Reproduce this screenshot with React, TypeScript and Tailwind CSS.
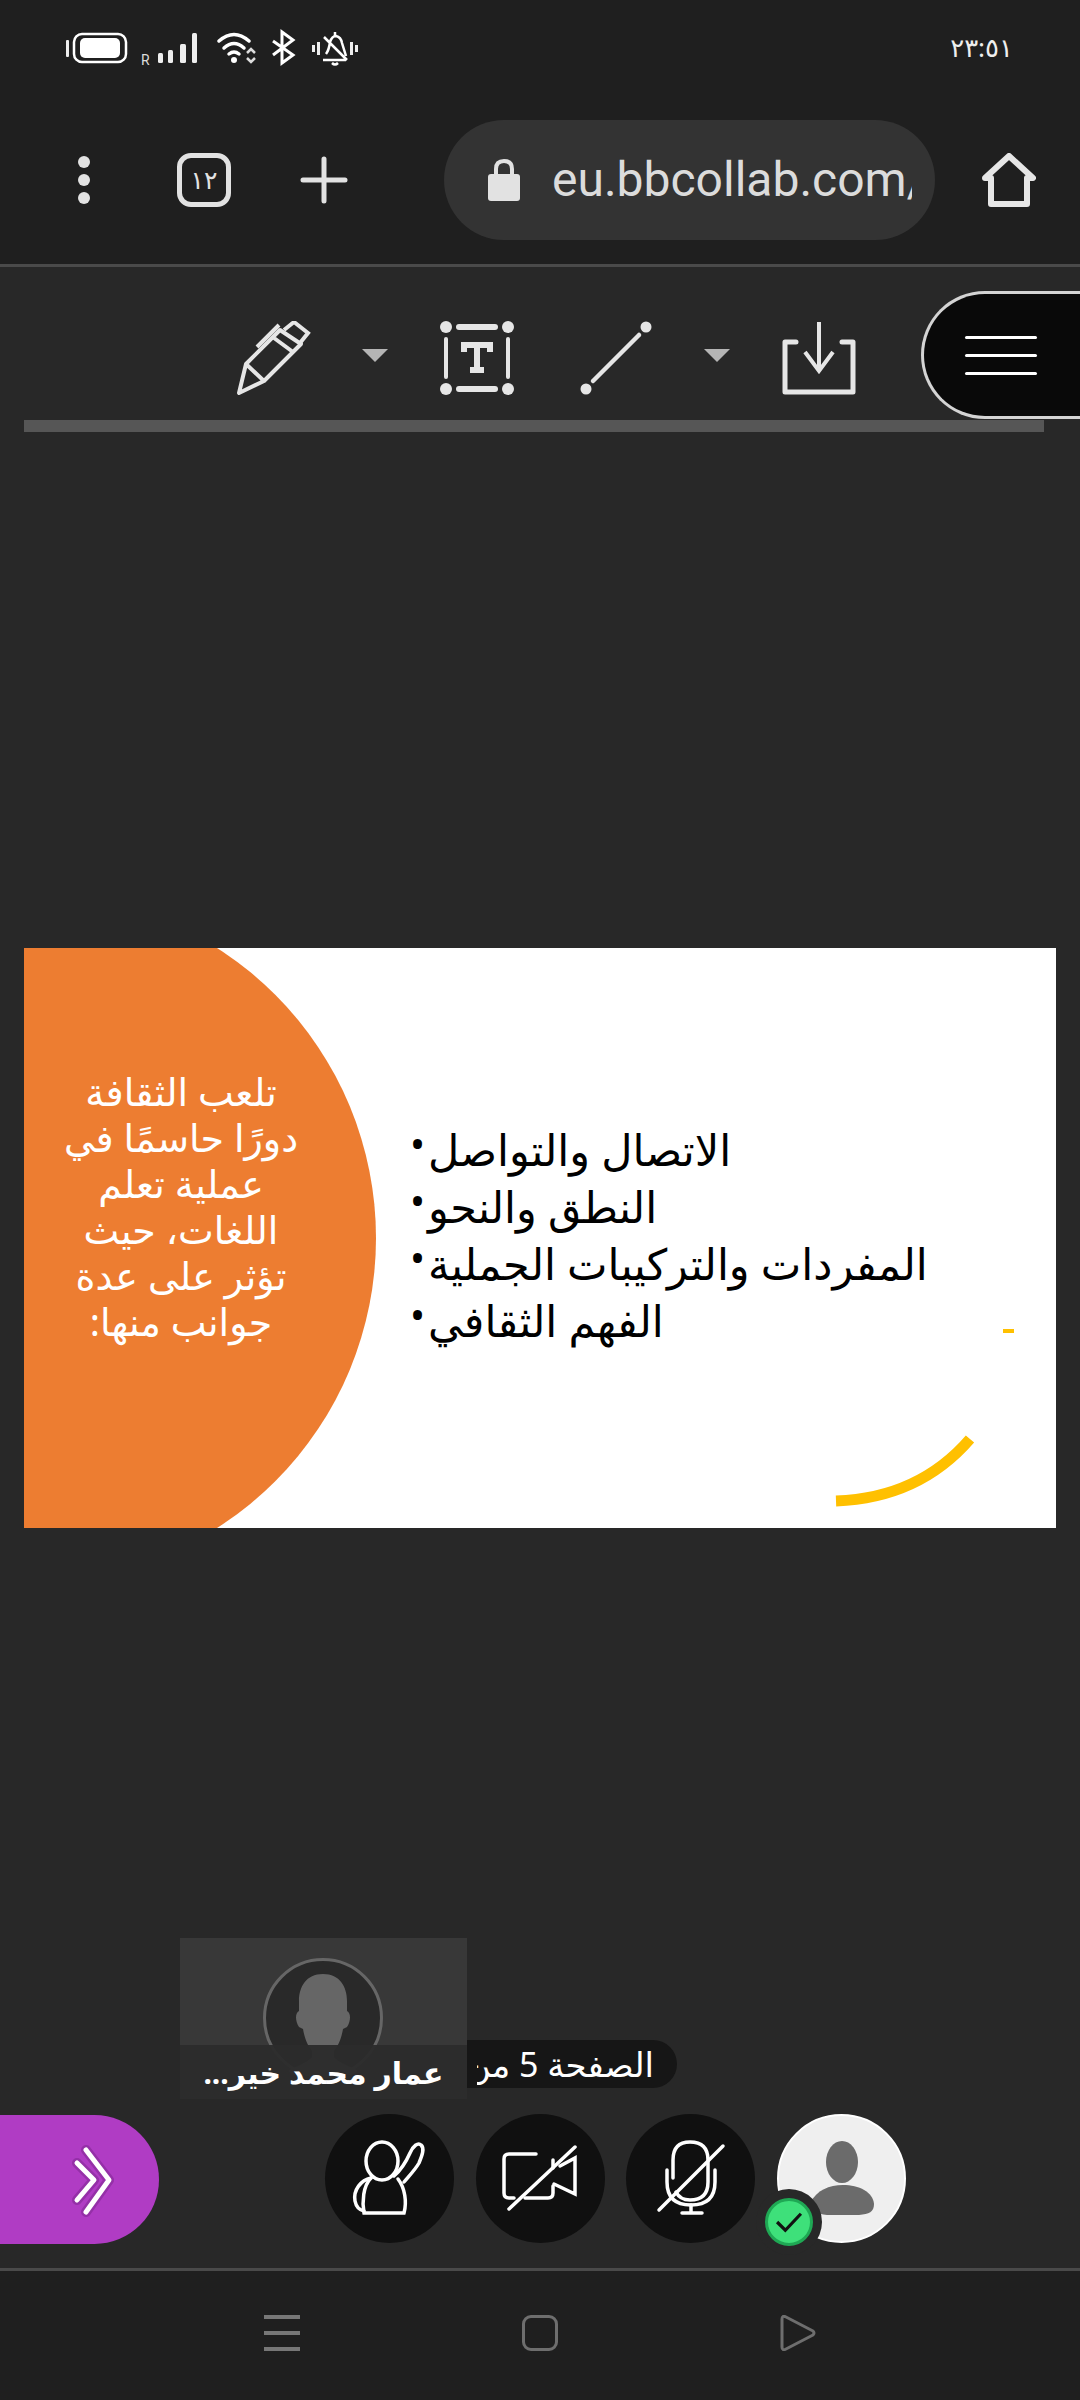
// Mobile browser showing a Blackboard Collaborate session
const ARABIC = "font-['Noto_Sans','DejaVu_Sans',sans-serif]";

function StatusIcons() {
  return (
    <svg viewBox="0 0 320 40" className="w-[320px] h-[40px] shrink-0">
      {/* battery */}
      <rect x="4" y="13" width="3" height="17" rx="1" fill="#eee" />
      <rect x="12" y="7" width="52" height="28" rx="8" fill="none" stroke="#fff" strokeWidth="2.5" />
      <rect x="18" y="11" width="40" height="20" rx="5" fill="#fff" />
      {/* signal */}
      <text x="79" y="38" fontSize="14" fill="#ddd" fontFamily="Roboto, sans-serif">R</text>
      <rect x="96" y="26" width="5" height="10" rx="1.5" fill="#eee" />
      <rect x="106" y="23" width="5" height="13" rx="1.5" fill="#eee" />
      <rect x="118" y="17" width="6" height="19" rx="1.5" fill="#eee" />
      <rect x="130" y="6" width="5" height="30" rx="1.5" fill="#eee" />
      {/* wifi */}
      <g fill="none" stroke="#fff" strokeWidth="3.5" strokeLinecap="round">
        <path d="M157 14 Q172 1 187 14" />
        <path d="M162 21 Q172 12 182 21" />
        <path d="M167 27 Q172 23 177 27" />
      </g>
      <circle cx="172" cy="33" r="3" fill="#fff" />
      <path d="M185 26 L189 22 L193 26 M185 31 L189 35 L193 31" fill="none" stroke="#ddd" strokeWidth="2.5" />
      {/* bluetooth */}
      <path d="M211 14 L231 28 L220 36 V5 L231 13 L211 28" fill="none" stroke="#fff" strokeWidth="3" />
      {/* muted bell */}
      <g fill="none" stroke="#fff" strokeWidth="2.5">
        <path d="M264 27 Q267 23 268 15 Q270 9 274 9 Q279 10 280 16 L284 29 M261 33 H284 M262 10 L285 33" />
        <path d="M270 36 Q273 39 276 36" />
        <path d="M273 9 V5" />
      </g>
      <rect x="250" y="18" width="3" height="7" fill="#eee" />
      <rect x="255" y="15" width="3" height="13" fill="#eee" />
      <rect x="288" y="15" width="3" height="13" fill="#eee" />
      <rect x="293" y="18" width="3" height="7" fill="#eee" />
    </svg>
  );
}

function ToolIcon({ children, className }: { children: React.ReactNode; className: string }) {
  return (
    <svg viewBox="0 0 74 74" fill="none" stroke="#e6e6e6" strokeWidth="4" className={`w-[74px] h-[74px] mt-[6px] shrink-0 ${className}`}>
      {children}
    </svg>
  );
}

function Caret({ className }: { className: string }) {
  return <div className={`w-0 h-0 border-x-[13px] border-x-transparent border-t-[13px] border-t-[#b5b5b5] shrink-0 ${className}`} />;
}

function RoundButton({ children }: { children: React.ReactNode }) {
  return (
    <div className="w-[129px] h-[129px] rounded-full bg-[#101010] shrink-0">
      <svg viewBox="0 0 129 129" fill="none" stroke="#fff" strokeWidth="3.5" strokeLinecap="round" className="w-[129px] h-[129px]">
        {children}
      </svg>
    </div>
  );
}

export default function App() {
  const bullets = ['الاتصال والتواصل', 'النطق والنحو', 'المفردات والتركيبات الجملية', 'الفهم الثقافي'];
  const intro = ['تلعب الثقافة', 'دورًا حاسمًا في', 'عملية تعلم', 'اللغات، حيث', 'تؤثر على عدة', 'جوانب منها:'];

  return (
    <div className="w-[1080px] h-[2400px] flex flex-col bg-[#282828] overflow-hidden">
      {/* status bar */}
      <div className="h-[94px] bg-[#1f1f1f] flex items-center justify-between pl-[62px] pr-[67px] shrink-0">
        <StatusIcons />
        <span dir="ltr" className="font-['Noto_Sans','DejaVu_Sans',sans-serif] text-[26px] text-[#eee] tracking-tight">٢٣:٥١</span>
      </div>

      {/* browser toolbar */}
      <div className="h-[170px] bg-[#1f1f1f] flex items-start pt-[26px] shrink-0">
        <div className="ml-[78px] w-[12px] h-[120px] flex flex-col items-center justify-center gap-[6px]">
          <div className="w-[12px] h-[12px] rounded-full bg-[#e2e2e2]" />
          <div className="w-[12px] h-[12px] rounded-full bg-[#e2e2e2]" />
          <div className="w-[12px] h-[12px] rounded-full bg-[#e2e2e2]" />
        </div>
        <div className="ml-[87px] mt-[33px] w-[54px] h-[54px] rounded-[14px] border-[5px] border-[#e2e2e2] flex items-center justify-center font-['Noto_Sans','DejaVu_Sans',sans-serif] text-[25px] text-[#e2e2e2]">
          ١٢
        </div>
        <svg viewBox="0 0 48 48" className="ml-[69px] mt-[36px] w-[48px] h-[48px]" stroke="#e2e2e2" strokeWidth="5" strokeLinecap="round">
          <path d="M24 3 V45 M3 24 H45" />
        </svg>
        <div className="ml-[96px] w-[491px] h-[120px] rounded-full bg-[#333333] flex items-center pl-[44px] pr-[23px]">
          <svg viewBox="0 0 32 44" className="w-[32px] h-[44px] shrink-0">
            <path d="M8 18 V11 Q8 3 16 3 Q24 3 24 11 V18" fill="none" stroke="#e2e2e2" strokeWidth="4" />
            <rect x="0" y="16" width="32" height="27" rx="3" fill="#e2e2e2" />
          </svg>
          <div className="ml-[32px] overflow-hidden whitespace-nowrap font-['Roboto',sans-serif] text-[48px] text-[#dcdcdc]">
            eu.bbcollab.com/
          </div>
        </div>
        <svg viewBox="0 0 54 54" fill="none" stroke="#e6e6e6" strokeWidth="6" strokeLinejoin="round" className="ml-[47px] mt-[33px] w-[54px] h-[54px]">
          <path d="M3 25 L27 3 L51 25 H45 V51 H9 V25 Z" />
        </svg>
      </div>
      <div className="h-[3px] bg-[#4a4a4a] shrink-0" />

      {/* collaborate tools */}
      <div className="flex items-center mt-[24px] h-[128px] shrink-0">
        <ToolIcon className="ml-[237px]">
          <path d="M2 72 L9 43 L43 9 L64 23 L27 60 Z M9 43 L27 60 M37 17 L56 31" strokeLinejoin="round" />
          <path d="M20 26 L42 4 M47 9 L57 1 L71 12 L63 22" />
        </ToolIcon>
        <Caret className="ml-[51px]" />
        <ToolIcon className="ml-[52px]">
          <g fill="#e6e6e6" stroke="none">
            <circle cx="6" cy="6" r="6" />
            <circle cx="68" cy="6" r="6" />
            <circle cx="6" cy="68" r="6" />
            <circle cx="68" cy="68" r="6" />
            <rect x="16" y="3" width="42" height="6" rx="3" />
            <rect x="16" y="65" width="42" height="6" rx="3" />
            <rect x="4" y="16" width="4" height="42" rx="2" />
            <rect x="66" y="16" width="4" height="42" rx="2" />
          </g>
          <path d="M24 31 V24 H50 V31 M37 24 V48 M30 49 H44" strokeWidth="6" />
        </ToolIcon>
        <ToolIcon className="ml-[66px]">
          <circle cx="6" cy="68" r="5.5" fill="#e6e6e6" stroke="none" />
          <circle cx="66" cy="6" r="5.5" fill="#e6e6e6" stroke="none" />
          <path d="M13 60 L59 14" strokeLinecap="round" strokeWidth="4.5" />
        </ToolIcon>
        <Caret className="ml-[50px]" />
        <ToolIcon className="ml-[52px]">
          <path d="M14 21 H3 V71 H71 V21 H60" strokeWidth="5" strokeLinejoin="round" strokeLinecap="round" />
          <path d="M37 1 V50 M23 31 L37 50 L51 31" strokeWidth="4" />
        </ToolIcon>
        <div className="ml-[65px] flex-1 h-[128px] rounded-l-[64px] bg-[#090909] border-[3px] border-r-0 border-[#d4d4d4] flex flex-col justify-center gap-[15px] pl-[41px]">
          <div className="w-[72px] h-[3px] bg-white rounded-full" />
          <div className="w-[72px] h-[3px] bg-white rounded-full" />
          <div className="w-[72px] h-[3px] bg-white rounded-full" />
        </div>
      </div>
      <div className="mt-[1px] ml-[24px] w-[1020px] h-[12px] bg-[#565656] shrink-0" />

      {/* slide */}
      <div className="relative mt-[516px] ml-[24px] w-[1032px] h-[580px] bg-white overflow-hidden flex shrink-0">
        <div className="absolute left-[-336px] top-[-54px] w-[688px] h-[688px] rounded-full bg-[#ed7d31]" />
        <div className={`relative w-[314px] pt-[120px] flex flex-col items-center ${ARABIC} text-[38px] leading-[46px] text-white`} dir="rtl">
          {intro.map((line) => (
            <div key={line} className="whitespace-nowrap">{line}</div>
          ))}
        </div>
        <div className={`relative ml-[72px] mt-[173px] flex flex-col ${ARABIC} text-[43px] leading-[57px] text-black`}>
          {bullets.map((line) => (
            <div key={line} className="flex items-start">
              <span className="w-[18px] shrink-0 text-[40px] leading-[46px]">•</span>
              <span dir="rtl">{line}</span>
            </div>
          ))}
        </div>
        <div className="absolute left-[979px] top-[381px] w-[11px] h-[4px] bg-[#ffc000]" />
        <svg viewBox="0 0 1032 580" className="absolute inset-0 w-[1032px] h-[580px]" fill="none">
          <path d="M812 553 Q895 550 946 491" stroke="#ffc000" strokeWidth="11" />
        </svg>
      </div>

      {/* participant tile and page count */}
      <div className="flex items-start mt-[410px] ml-[180px] shrink-0">
        <div className="relative z-10 w-[287px] h-[161px] bg-[#383838] overflow-hidden flex justify-center pt-[20px] pr-[2px]">
          <div className="w-[120px] h-[120px] rounded-full border-[3px] border-[#666666] bg-[#292929] shrink-0">
            <svg viewBox="0 0 114 114" className="w-[114px] h-[114px]">
              <path d="M57 13 C40 13 33 26 33 40 V50 C29 52 29 60 33 66 L37 68 C39 80 43 86 46 90 V96 C41 102 28 106 22 110 A57 57 0 0 0 92 110 C86 106 73 102 68 96 V90 C71 86 75 80 77 68 L81 66 C85 60 85 52 81 50 V40 C81 26 74 13 57 13 Z" fill="#666666" />
            </svg>
          </div>
          <div className="absolute left-0 right-0 bottom-0 h-[54px] bg-[#2b2b2b]/95 flex items-center justify-center">
            <span dir="rtl" className={`${ARABIC} font-bold text-[30px] text-white whitespace-nowrap`}>عمار محمد خير...</span>
          </div>
        </div>
        <div className="mt-[102px] w-[210px] h-[48px] rounded-r-full bg-[#161616] pl-[10px] pr-[23px] flex items-center">
          <div dir="rtl" className={`w-[177px] overflow-hidden whitespace-nowrap ${ARABIC} text-[34px] leading-[48px] text-white`}>
            الصفحة 5 من 29
          </div>
        </div>
      </div>

      {/* session controls */}
      <div className="flex items-start mt-[15px] shrink-0">
        <div className="mt-[1px] w-[159px] h-[129px] rounded-r-[65px] bg-[#b03cc4] shrink-0">
          <svg viewBox="0 0 159 129" fill="none" strokeLinecap="round" strokeLinejoin="round" className="w-[159px] h-[129px]">
            <path d="M86 35 L109 65 L86 97 M77 48 L94 65 L77 85" stroke="#9530a8" strokeWidth="10" />
            <path d="M86 35 L109 65 L86 97 M77 48 L94 65 L77 85" stroke="#fff" strokeWidth="5" />
          </svg>
        </div>
        <div className="ml-[166px] flex gap-[21.6px]">
          <RoundButton>
            <ellipse cx="57" cy="47" rx="16" ry="19" />
            <path d="M46 64 C38 72 37 88 39 99 H79 C82 88 80 74 73 65" />
            <path d="M46 64 C36 66 28 76 30 87 C31 92 34 96 39 97" />
            <path d="M69 62 C76 56 81 48 85 39 C88 32 93 28 96 31 C100 34 97 42 94 49 C90 56 84 62 79 68" />
          </RoundButton>
          <RoundButton>
            <path d="M60 40 H33 Q28 40 28 45 V79 Q28 84 33 84 H38 M49 84 H72 Q77 84 77 79 V72 M77 54 V46" />
            <path d="M84 52 L99 44 V80 L78 70" />
            <path d="M33 95 L99 33" />
          </RoundButton>
          <RoundButton>
            <path d="M47 64 V46 Q47 28 64 28 Q82 28 82 46 V68 Q82 86 64 86 Q54 86 50 78" />
            <path d="M41 56 V68 Q41 91 65 91 Q89 91 89 68 V56" />
            <path d="M65 91 V99 M56 99 H76" />
            <path d="M33 96 L97 32" />
          </RoundButton>
          <div className="relative w-[129px] h-[129px] rounded-full bg-[#efefef] border-[2px] border-white shrink-0">
            <svg viewBox="0 0 129 129" className="absolute left-[-2px] top-[-2px] w-[129px] h-[129px]" fill="#6b6b6b">
              <ellipse cx="65" cy="48" rx="16" ry="21" />
              <path d="M33 89 C40 76 52 71 66 71 C82 71 96 78 97 90 C97 98 92 100 82 101 H50 C40 100 33 97 33 89 Z" />
            </svg>
            <div className="absolute left-[-23px] top-[73px] w-[66px] h-[66px] rounded-full bg-[#282828] flex items-center justify-center">
              <div className="w-[48px] h-[48px] rounded-full bg-[#3ee07a] border-[3px] border-[#1fa854] flex items-center justify-center">
                <svg viewBox="0 0 30 24" fill="none" stroke="#111" strokeWidth="3.5" className="w-[28px] h-[22px]">
                  <path d="M2 12 L11 21 L28 3" />
                </svg>
              </div>
            </div>
          </div>
        </div>
      </div>

      {/* android nav bar */}
      <div className="mt-auto h-[3px] bg-[#4a4a4a] shrink-0" />
      <div className="h-[129px] bg-[#1f1f1f] flex items-start pt-[44px] shrink-0">
        <div className="ml-[264px] w-[36px] h-[36px] flex flex-col justify-between">
          <div className="h-[4px] bg-[#777777]" />
          <div className="h-[4px] bg-[#777777]" />
          <div className="h-[4px] bg-[#777777]" />
        </div>
        <div className="ml-[222px] w-[36px] h-[36px] rounded-[9px] border-[3px] border-[#6e6e6e]" />
        <svg viewBox="0 0 36 36" fill="none" stroke="#6e6e6e" strokeWidth="3" strokeLinejoin="round" className="ml-[222px] w-[36px] h-[36px]">
          <path d="M2 4 Q2 0 6 2 L33 16 Q35 18 33 20 L6 34 Q2 36 2 32 Z" />
        </svg>
      </div>
    </div>
  );
}
